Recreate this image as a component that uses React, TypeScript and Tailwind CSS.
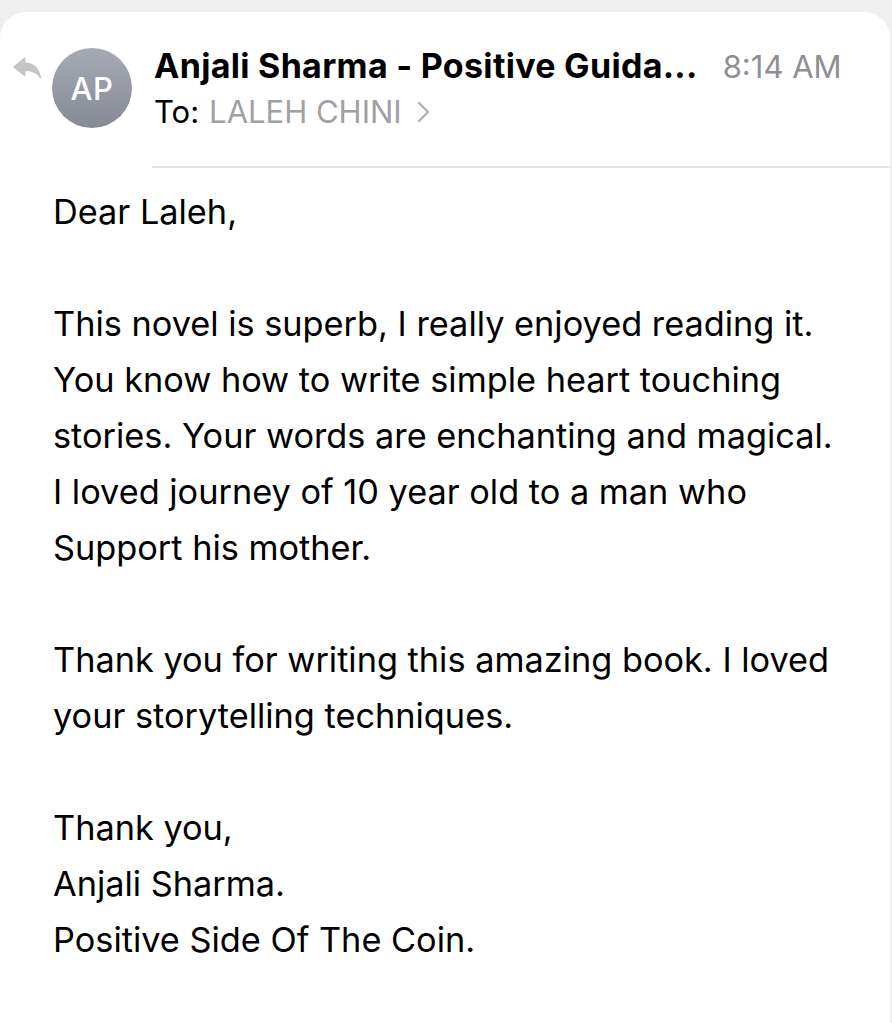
import React from "react";

const font = { fontFamily: "Inter, 'Liberation Sans', sans-serif" };

function ReplyIcon() {
  return (
    <svg width="29" height="22" viewBox="0 0 29 22" className="block">
      <path
        d="M0.5 9.5 L11 0.8 C11.6 0.3 12.5 0.7 12.5 1.5 L12.5 5.6 C20.5 5.9 26.5 10.5 28 20.5 C28.1 21.2 27.3 21.5 26.9 21 C24 16.6 19.5 14.2 12.5 14 L12.5 18 C12.5 18.8 11.6 19.2 11 18.7 L0.5 10.5 C0.2 10.2 0.2 9.8 0.5 9.5 Z"
        fill="#c4c4c7"
      />
    </svg>
  );
}

export default function App() {
  const paragraphs = [
    ["Dear Laleh,"],
    [
      "This novel is superb, I really enjoyed reading it.",
      "You know how to write simple heart touching",
      "stories. Your words are enchanting and magical.",
      "I loved journey of 10 year old to a man who",
      "Support his mother.",
    ],
    [
      "Thank you for writing this amazing book. I loved",
      "your storytelling techniques.",
    ],
    ["Thank you,", "Anjali Sharma.", "Positive Side Of The Coin."],
  ];
  return (
    <div className="w-[892px] h-[1023px] bg-[#efefef] pt-[12px] overflow-hidden" style={font}>
      <div className="bg-white rounded-t-[26px] h-[1011px] w-[890px]">
        <div className="flex pt-[36px]">
          <div className="pl-[13px] pt-[9px] w-[52px] shrink-0">
            <ReplyIcon />
          </div>
          <div className="w-[80px] h-[80px] rounded-full bg-gradient-to-b from-[#a6aab3] to-[#868a95] flex items-center justify-center shrink-0">
            <span className="text-white text-[31px] font-medium leading-none tracking-[0.5px]">AP</span>
          </div>
          <div className="pl-[22px] mt-[-3px]">
            <div className="flex items-baseline">
              <span className="text-black text-[34px] font-bold leading-[42px] tracking-[0.3px]">
                Anjali Sharma - Positive Guida...
              </span>
              <span className="ml-[25px] text-[#8e8e93] text-[31px] leading-[42px]">8:14 AM</span>
            </div>
            <div className="flex items-center text-[31px] leading-[44px] mt-[2px]">
              <span className="text-black">To:</span>
              <span className="ml-[10px] text-[#a0a0a5]">LALEH CHINI</span>
              <svg width="14" height="22" viewBox="0 0 14 22" className="ml-[15px]">
                <path d="M2 2 L11 11 L2 20" stroke="#b0b0b5" strokeWidth="2.4" fill="none" strokeLinecap="round" strokeLinejoin="round" />
              </svg>
            </div>
          </div>
        </div>
        <div className="ml-[152px] mt-[32px] border-t-[2px] border-[#e4e4e6]" />
        <div className="pl-[53px] pt-[16px] text-black text-[34.3px] leading-[56px]">
          {paragraphs.map((p, i) => (
            <div key={i} className={i > 0 ? "mt-[56px]" : ""}>
              {p.map((l, j) => (
                <div key={j} className="whitespace-nowrap">{l}</div>
              ))}
            </div>
          ))}
        </div>
      </div>
    </div>
  );
}
